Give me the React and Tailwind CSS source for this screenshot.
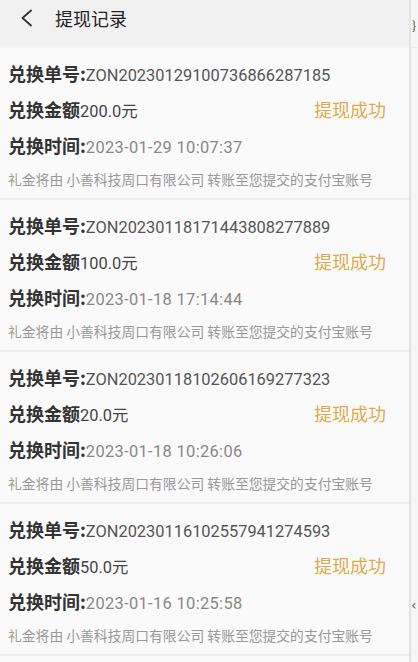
import React from "react";

const records = [
  { id: "ZON20230129100736866287185", amount: "200.0元", time: "2023-01-29 10:07:37" },
  { id: "ZON20230118171443808277889", amount: "100.0元", time: "2023-01-18 17:14:44" },
  { id: "ZON20230118102606169277323", amount: "20.0元", time: "2023-01-18 10:26:06" },
  { id: "ZON20230116102557941274593", amount: "50.0元", time: "2023-01-16 10:25:58" },
];

const cjk = "font-['Noto_Sans_CJK_SC',sans-serif]";
const latin = "font-['Roboto','Noto_Sans_CJK_SC',sans-serif]";

function Record({ r }) {
  return (
    <div className="bg-[#fafafa] border-b-2 border-[#efefef] pl-[8px] pr-[23px] pt-[7px] pb-[3px]">
      <div className="h-[36px] flex items-baseline leading-[36px]">
        <span className={`${cjk} text-[18px] font-bold text-[#333]`}>兑换单号:</span>
        <span className={`${latin} text-[16.4px] text-[#555]`}>{r.id}</span>
      </div>
      <div className="h-[36px] flex items-baseline justify-between leading-[36px]">
        <div className="flex items-baseline">
          <span className={`${cjk} text-[18px] font-bold text-[#333]`}>兑换金额</span>
          <span className={`${latin} text-[16.4px] text-[#444]`}>{r.amount}</span>
        </div>
        <span className={`${cjk} text-[18px] text-[#dcaa4e]`}>提现成功</span>
      </div>
      <div className="h-[36px] flex items-baseline leading-[36px]">
        <span className={`${cjk} text-[18px] font-bold text-[#333]`}>兑换时间:</span>
        <span className={`${latin} text-[16.4px] tracking-[0.35px] text-[#888]`}>{r.time}</span>
      </div>
      <div className={`h-[32px] leading-[32px] ${cjk} text-[13.8px] text-[#999] whitespace-nowrap`}>
        礼金将由 小善科技周口有限公司 转账至您提交的支付宝账号
      </div>
    </div>
  );
}

export default function App() {
  return (
    <div className="w-[418px] h-[662px] overflow-hidden flex bg-[#fafafa]">
      <div className="w-[409px] shrink-0 flex flex-col">
        <div className="h-[48px] bg-[#f1f1f1] flex items-start pt-[7px] border-b-2 border-[#f4f4f4]">
          <div className="w-[55px] h-[22px] flex items-center pl-[19px]">
            <svg width="16" height="18" viewBox="0 0 16 18" fill="none">
              <path d="M12 1.5 L3.5 9 L12 16.5" stroke="#333" strokeWidth="1.8" strokeLinecap="round" strokeLinejoin="round" />
            </svg>
          </div>
          <span className={`${cjk} text-[18px] leading-[22px] text-[#222]`}>提现记录</span>
        </div>
        {records.map((r) => (
          <Record key={r.id} r={r} />
        ))}
      </div>
      <div className="w-[2px] shrink-0 bg-[#e2e2e2]" />
      <div className="flex-1 bg-[#f6f6f6] flex flex-col overflow-hidden">
        <div className="h-[48px] border-b border-[#ececec] pt-[18px] pl-[1px] text-[12px] leading-[14px] text-[#444] font-['Noto_Sans_CJK_SC',sans-serif]">}</div>
        <div className="h-[549px]" />
        <div className="text-[14px] leading-[16px] text-[#666] font-['DejaVu_Sans',sans-serif]">‹</div>
      </div>
    </div>
  );
}
